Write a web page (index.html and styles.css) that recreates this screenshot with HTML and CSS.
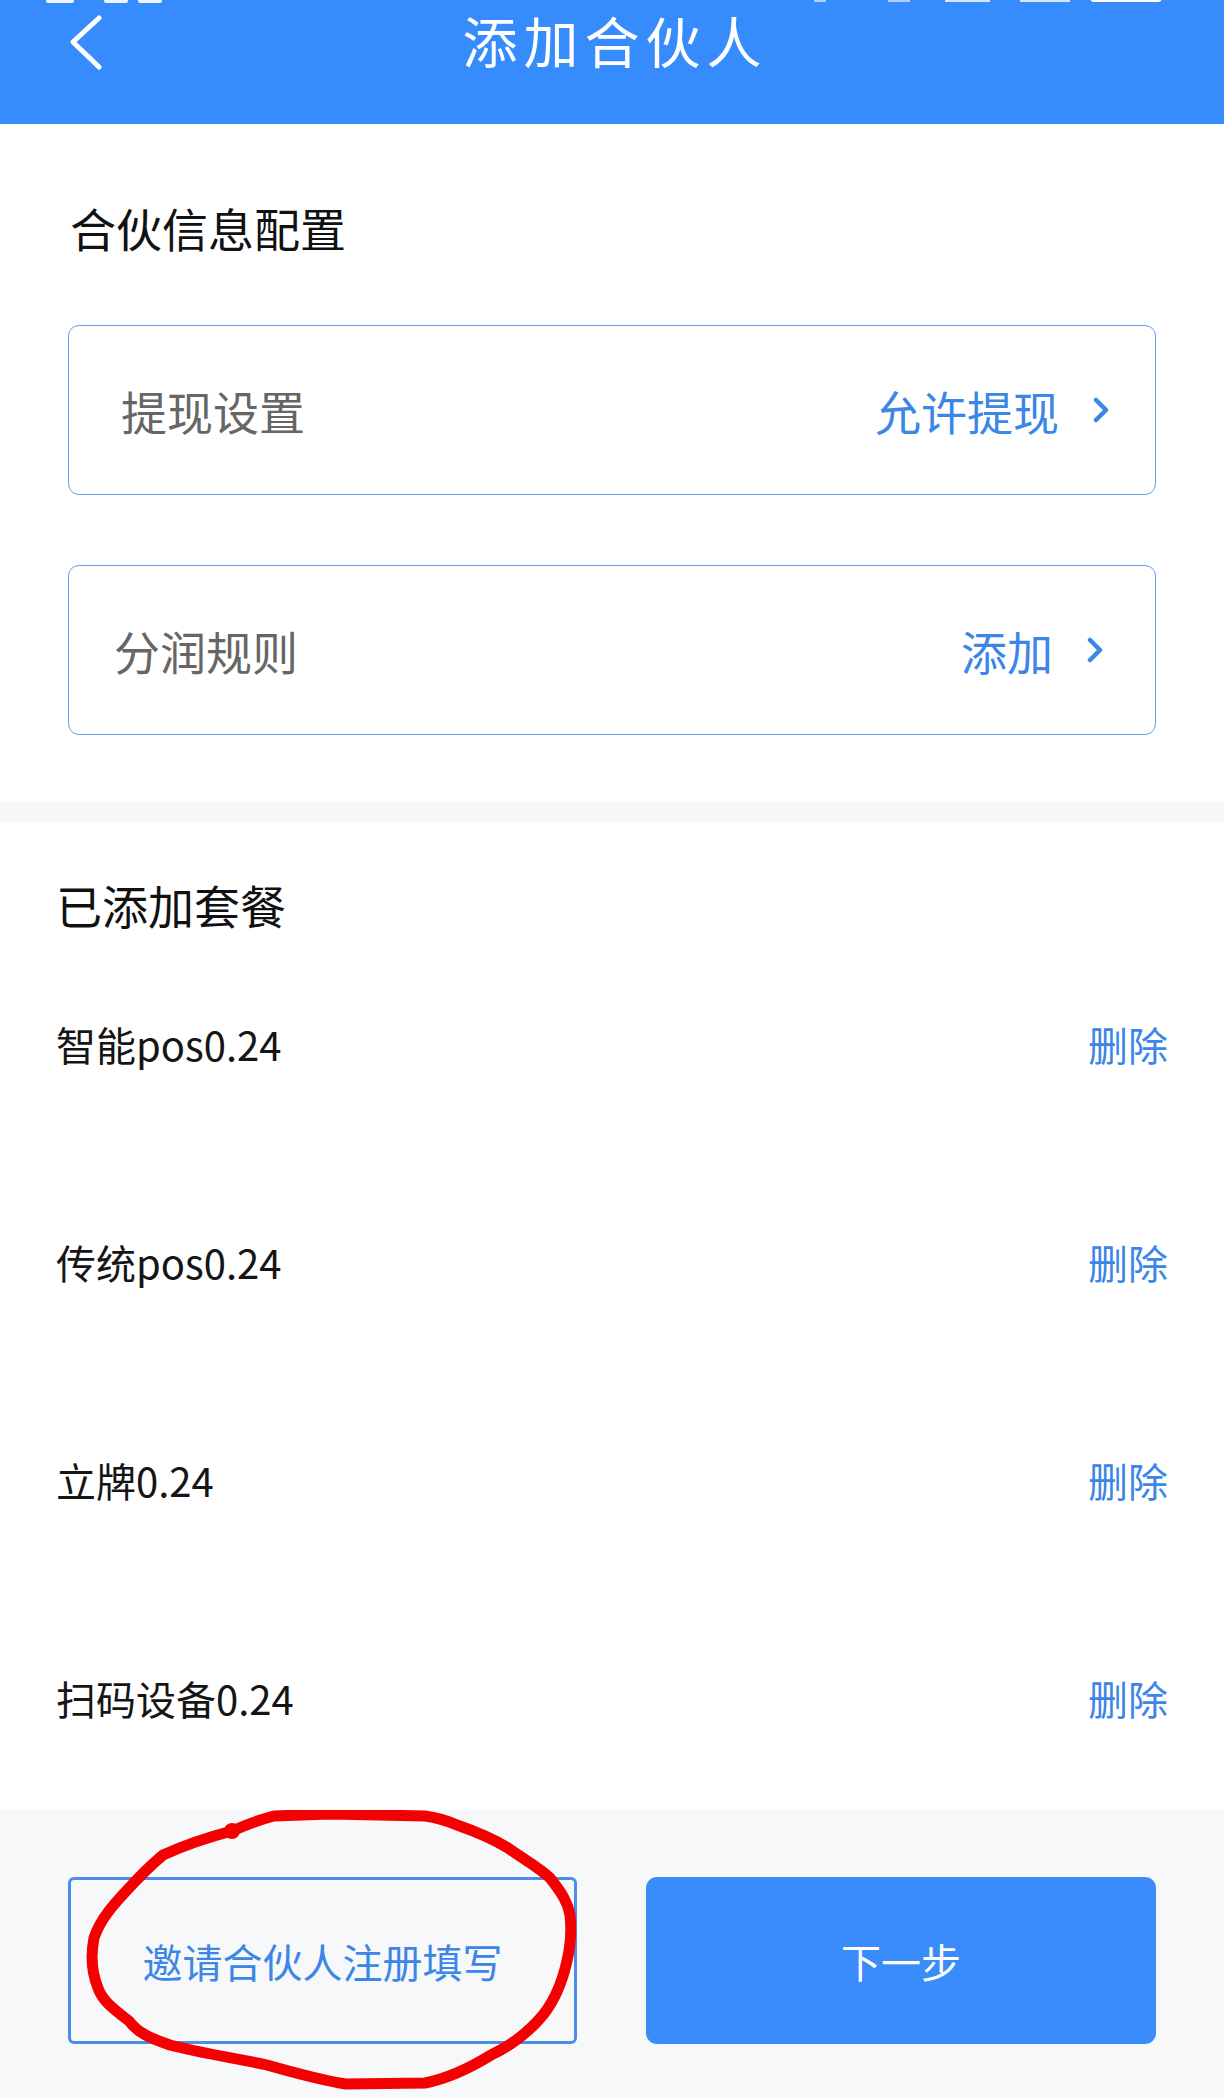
FILE: index.html
```html
<!DOCTYPE html>
<html lang="zh-CN">
<head>
<meta charset="utf-8">
<title>添加合伙人</title>
<link rel="stylesheet" href="styles.css">
</head>
<body>
<div class="page">
  <header class="topbar">
    <svg class="status-strip" width="1224" height="8" viewBox="0 0 1224 8" aria-hidden="true">
      <rect x="46" y="-3" width="28" height="6" rx="2" fill="#fff" opacity="0.9"/>
      <rect x="104" y="-3" width="24" height="6" rx="2" fill="#fff" opacity="0.9"/>
      <rect x="138" y="-3" width="24" height="6" rx="2" fill="#fff" opacity="0.9"/>
      <rect x="814" y="-2" width="12" height="4" fill="#fff" opacity="0.6"/>
      <rect x="888" y="-2" width="22" height="4" fill="#fff" opacity="0.6"/>
      <rect x="945" y="-2" width="45" height="4" fill="#fff" opacity="0.8"/>
      <rect x="1020" y="-2" width="50" height="4" fill="#fff" opacity="0.8"/>
      <rect x="1090" y="-8" width="72" height="10" rx="4" fill="#fff"/>
    </svg>
    <div class="topbar-left">
      <svg class="back" width="40" height="60" viewBox="0 0 40 60" aria-hidden="true">
        <polyline points="29,3 3,27 29,52" fill="none" stroke="#fff" stroke-width="5" stroke-linecap="round" stroke-linejoin="round"/>
      </svg>
    </div>
    <h1 class="topbar-title">添加合伙人</h1>
    <div class="topbar-right"></div>
  </header>

  <section class="config">
    <h2 class="section-title">合伙信息配置</h2>
    <div class="card card-withdraw">
      <span class="card-label">提现设置</span>
      <span class="card-value">允许提现</span>
      <svg class="arrow" width="16" height="26" viewBox="0 0 16 26" aria-hidden="true">
        <polyline points="3,3 13,13 3,23" fill="none" stroke="#3b86e6" stroke-width="4.5" stroke-linecap="round" stroke-linejoin="round"/>
      </svg>
    </div>
    <div class="card card-profit">
      <span class="card-label">分润规则</span>
      <span class="card-value">添加</span>
      <svg class="arrow" width="16" height="26" viewBox="0 0 16 26" aria-hidden="true">
        <polyline points="3,3 13,13 3,23" fill="none" stroke="#3b86e6" stroke-width="4.5" stroke-linecap="round" stroke-linejoin="round"/>
      </svg>
    </div>
  </section>

  <div class="divider"></div>

  <section class="packages">
    <h2 class="section-title pkg-title">已添加套餐</h2>
    <ul class="pkg-list">
      <li class="pkg-row"><span class="pkg-name">智能pos0.24</span><span class="pkg-del">删除</span></li>
      <li class="pkg-row"><span class="pkg-name">传统pos0.24</span><span class="pkg-del">删除</span></li>
      <li class="pkg-row"><span class="pkg-name">立牌0.24</span><span class="pkg-del">删除</span></li>
      <li class="pkg-row"><span class="pkg-name">扫码设备0.24</span><span class="pkg-del">删除</span></li>
    </ul>
  </section>

  <footer class="footer">
    <button class="btn btn-outline">邀请合伙人注册填写</button>
    <button class="btn btn-primary">下一步</button>
    <svg class="mark" width="1224" height="288" viewBox="0 0 1224 288" aria-hidden="true">
      <path d="M274,6 L330,4 L425,6 C440,8 450,12 457,15 C480,23 495,30 508,38 C525,50 540,58 550,68 C562,83 568,93 570,105 C572,123 570,138 567,151 C562,173 555,190 543,205 C528,223 510,236 491,245 C470,258 450,268 425,273 L346,274 C320,270 295,263 267,255 C235,248 200,243 170,235 C150,228 138,223 129,211 C112,198 102,190 98,178 C92,163 90,148 94,128 C100,110 112,96 129,78 C140,66 150,56 163,45 C185,35 205,28 232,21 C248,14 262,9 274,6 Z" fill="none" stroke="#f40000" stroke-width="11" stroke-linejoin="round" stroke-linecap="round"/>
      <circle cx="232" cy="21" r="8" fill="#f40000"/>
    </svg>
  </footer>
</div>
</body>
</html>
```

FILE: styles.css
```css
* {
  box-sizing: border-box;
}

html, body {
  margin: 0;
  padding: 0;
  background: #ffffff;
}

body {
  font-family: "Noto Sans CJK SC", "Noto Sans", sans-serif;
  color: #1a1a1a;
}

.page {
  width: 1224px;
  display: flex;
  flex-direction: column;
}

/* Header */
.topbar {
  position: relative;
  height: 124px;
  background: #368bfd;
  display: grid;
  grid-template-columns: 1fr auto 1fr;
  align-items: start;
  padding-top: 15px;
}

.status-strip {
  position: absolute;
  left: 0;
  top: 0;
}

.topbar-left {
  padding-left: 70px;
  display: flex;
}

.back {
  display: block;
}

.topbar-title {
  margin: -6px 0 0;
  font-size: 55px;
  line-height: 60px;
  font-weight: 400;
  color: #ffffff;
  letter-spacing: 6px;
  padding-left: 6px;
}

/* Config section */
.config {
  padding: 76px 68px 67px;
  display: flex;
  flex-direction: column;
  gap: 70px;
}

.section-title {
  margin: 0;
  font-size: 46px;
  line-height: 55px;
  font-weight: 400;
  color: #111111;
  padding-left: 2px;
}

.card {
  height: 170px;
  border: 1.5px solid #64a0ea;
  border-radius: 11px;
  display: flex;
  align-items: center;
  background: #ffffff;
}

.card-label {
  flex: 1;
  font-size: 46px;
  line-height: 56px;
  color: #666666;
}

.card-value {
  font-size: 46px;
  line-height: 56px;
  color: #3b86e6;
}

.arrow {
  display: block;
  margin-left: 34px;
}

.card-withdraw {
  padding: 0 46px 0 52px;
}

.card-profit {
  padding: 0 52px 0 45px;
}

.divider {
  height: 20px;
  background: #f7f7f8;
}

/* Packages */
.packages {
  padding: 55px 56px 3px;
  display: flex;
  flex-direction: column;
}

.pkg-title {
  padding-left: 0;
}

.pkg-list {
  list-style: none;
  margin: 3px 0 0;
  padding: 0;
}

.pkg-row {
  height: 218px;
  display: flex;
  align-items: center;
  justify-content: space-between;
}

.pkg-name {
  font-size: 40px;
  line-height: 50px;
  color: #151515;
}

.pkg-del {
  font-size: 40px;
  line-height: 50px;
  color: #3b86e6;
}

/* Footer */
.footer {
  position: relative;
  height: 290px;
  background: #f7f8fa;
  padding: 67px 68px 0;
  display: grid;
  grid-template-columns: 509px 510px;
  justify-content: space-between;
  align-items: start;
}

.btn {
  height: 167px;
  font-family: "Noto Sans CJK SC", "Noto Sans", sans-serif;
  font-size: 40px;
  line-height: 50px;
  border-radius: 8px;
  cursor: pointer;
  padding: 0;
}

.btn-outline {
  background: transparent;
  border: 3px solid #4a8ee9;
  border-radius: 6px;
  color: #3b86e6;
}

.btn-primary {
  background: #3a8cfb;
  border: none;
  border-radius: 11px;
  color: #ffffff;
}

.mark {
  position: absolute;
  left: 0;
  top: 0;
  pointer-events: none;
}
```
